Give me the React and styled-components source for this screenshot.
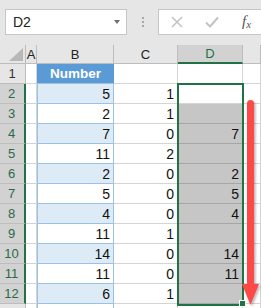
import React from "react";
import styled, { createGlobalStyle } from "styled-components";

const GlobalStyle = createGlobalStyle`
  html, body { margin: 0; padding: 0; background: #ffffff; }
  body { font-family: "Liberation Sans", Arial, sans-serif; }
`;

const rows = [
  { b: 5, c: 1, d: "" },
  { b: 2, c: 1, d: "" },
  { b: 7, c: 0, d: 7 },
  { b: 11, c: 2, d: "" },
  { b: 2, c: 0, d: 2 },
  { b: 5, c: 0, d: 5 },
  { b: 4, c: 0, d: 4 },
  { b: 11, c: 1, d: "" },
  { b: 14, c: 0, d: 14 },
  { b: 11, c: 0, d: 11 },
  { b: 6, c: 1, d: "" },
];

const App = () => {
  return (
    <Page>
      <GlobalStyle />
      <TopBar>
        <NameBox>
          <NameText>D2</NameText>
          <DropArrow />
        </NameBox>
        <Dots>
          <Dot />
          <Dot />
          <Dot />
        </Dots>
        <FormulaBox>
          <FormulaIcon $left={12}>
            <svg width="12" height="12" viewBox="0 0 12 12">
              <path d="M1 1 L11 11 M11 1 L1 11" stroke="#c3c3c3" strokeWidth="1.6" fill="none" />
            </svg>
          </FormulaIcon>
          <FormulaIcon $left={22}>
            <svg width="14" height="12" viewBox="0 0 14 12">
              <path d="M1 6.5 L5 10.5 L13 1.5" stroke="#c3c3c3" strokeWidth="2" fill="none" />
            </svg>
          </FormulaIcon>
          <Fx>
            f<sub>x</sub>
          </Fx>
        </FormulaBox>
      </TopBar>

      <Sheet>
        <Corner>
          <svg width="14" height="13" viewBox="0 0 14 13">
            <polygon points="14,0 14,13 0,13" fill="#b8b8b8" />
          </svg>
        </Corner>
        <ColHead>A</ColHead>
        <ColHead>B</ColHead>
        <ColHead>C</ColHead>
        <ColHead $active>D</ColHead>
        <ColHead />

        <RowHead>1</RowHead>
        <Cell />
        <HeaderCell>Number</HeaderCell>
        <Cell />
        <Cell />
        <Cell />

        {rows.map((r, i) => (
          <React.Fragment key={i}>
            <RowHead $active>{i + 2}</RowHead>
            <Cell />
            <TableCell $band={i % 2 === 0}>{r.b}</TableCell>
            <Cell>{r.c}</Cell>
            <Cell $selected={i > 0}>{r.d}</Cell>
            <Cell />
          </React.Fragment>
        ))}

        <RowHead />
        <Cell />
        <TableCell $band={false} />
        <Cell />
        <Cell />
        <Cell />

        <Selection />
        <FillHandle />
        <Arrow>
          <svg width="22" height="214" viewBox="0 0 22 214">
            <defs>
              <filter id="sh" x="-50%" y="-10%" width="200%" height="120%">
                <feDropShadow dx="1.5" dy="1.5" stdDeviation="1" floodColor="#000" floodOpacity="0.3" />
              </filter>
            </defs>
            <g filter="url(#sh)">
              <rect x="7" y="4" width="7" height="186" rx="3.5" fill="#ff4848" />
              <polygon points="2,188 19,188 10.5,209" fill="#ff4848" />
            </g>
          </svg>
        </Arrow>
      </Sheet>
    </Page>
  );
};

const Page = styled.div`
  width: 261px;
  height: 308px;
  overflow: hidden;
  background: #ffffff;
`;

const TopBar = styled.div`
  height: 45px;
  background: #e6e6e6;
  display: flex;
  align-items: flex-start;
  padding-top: 9px;
  box-sizing: border-box;
`;

const NameBox = styled.div`
  margin-left: 5px;
  width: 122px;
  height: 26px;
  background: #ffffff;
  border: 1px solid #c6c6c6;
  box-sizing: border-box;
  display: flex;
  align-items: center;
  justify-content: space-between;
  padding: 0 6px 0 7px;
`;

const NameText = styled.span`
  font-size: 14px;
  color: #222222;
`;

const DropArrow = styled.span`
  width: 0;
  height: 0;
  border-left: 3.5px solid transparent;
  border-right: 3.5px solid transparent;
  border-top: 4px solid #6f6f6f;
`;

const Dots = styled.div`
  width: 31px;
  height: 26px;
  display: flex;
  flex-direction: column;
  align-items: center;
  justify-content: center;
  gap: 2px;
`;

const Dot = styled.span`
  width: 2px;
  height: 2px;
  background: #a8a8a8;
`;

const FormulaBox = styled.div`
  flex: 1;
  height: 26px;
  background: #ffffff;
  border: 1px solid #c6c6c6;
  border-right: none;
  box-sizing: border-box;
  display: flex;
  align-items: center;
`;

const FormulaIcon = styled.span`
  display: flex;
  margin-left: ${(p) => p.$left}px;
`;

const Fx = styled.span`
  margin-left: 23px;
  font-family: "Liberation Serif", "Times New Roman", serif;
  font-style: italic;
  font-size: 15px;
  color: #555555;
  line-height: 1;

  sub {
    font-size: 11px;
    vertical-align: -2px;
  }
`;

const Sheet = styled.div`
  position: relative;
  display: grid;
  grid-template-columns: 26px 11px 77px 64px 65px 1fr;
  grid-template-rows: 19px repeat(13, 20px);
  font-size: 14px;
  color: #111111;
`;

const Corner = styled.div`
  background: #e6e6e6;
  border-right: 1px solid #bdbdbd;
  border-bottom: 1px solid #bdbdbd;
  box-sizing: border-box;
  display: flex;
  align-items: flex-end;
  justify-content: flex-end;
  padding: 0 2px 2px 0;
`;

const ColHead = styled.div`
  background: ${(p) => (p.$active ? "#d2d2d2" : "#e6e6e6")};
  color: ${(p) => (p.$active ? "#217346" : "#222222")};
  border-right: 1px solid #bdbdbd;
  border-bottom: ${(p) => (p.$active ? "2px solid #217346" : "1px solid #bdbdbd")};
  box-sizing: border-box;
  font-size: 13px;
  display: flex;
  align-items: center;
  justify-content: center;
`;

const RowHead = styled.div`
  background: ${(p) => (p.$active ? "#d2d2d2" : "#e6e6e6")};
  color: ${(p) => (p.$active ? "#2a6a48" : "#333333")};
  border-right: ${(p) => (p.$active ? "2px solid #217346" : "1px solid #bdbdbd")};
  border-bottom: 1px solid #bdbdbd;
  box-sizing: border-box;
  font-size: 13px;
  display: flex;
  align-items: center;
  justify-content: center;
  padding-right: 1px;
`;

const Cell = styled.div`
  background: ${(p) => (p.$selected ? "#c6c6c6" : "#ffffff")};
  border-right: 1px solid #d4d4d4;
  border-bottom: 1px solid ${(p) => (p.$selected ? "#a6a6a6" : "#d4d4d4")};
  box-sizing: border-box;
  display: flex;
  align-items: flex-end;
  justify-content: flex-end;
  padding: 0 3px 1px 0;
`;

const TableCell = styled(Cell)`
  background: ${(p) => (p.$band ? "#ddebf7" : "#ffffff")};
  border-right: 1px solid #9bc2e6;
  border-bottom: 1px solid #9bc2e6;
  border-left: 1px solid #9bc2e6;
`;

const HeaderCell = styled.div`
  background: #5b9bd5;
  color: #ffffff;
  font-weight: bold;
  font-size: 13.5px;
  display: flex;
  align-items: center;
  justify-content: center;
  border-bottom: 1px solid #9bc2e6;
  box-sizing: border-box;
`;

const Selection = styled.div`
  position: absolute;
  left: 177px;
  top: 38px;
  width: 67px;
  height: 223px;
  border: 2px solid #217346;
  box-sizing: border-box;
  pointer-events: none;
`;

const FillHandle = styled.div`
  position: absolute;
  left: 239px;
  top: 255px;
  width: 7px;
  height: 7px;
  background: #217346;
  border: 1px solid #ffffff;
  box-sizing: border-box;
`;

const Arrow = styled.div`
  position: absolute;
  left: 240px;
  top: 51px;
  width: 22px;
  height: 214px;
  pointer-events: none;
`;

export default App;
